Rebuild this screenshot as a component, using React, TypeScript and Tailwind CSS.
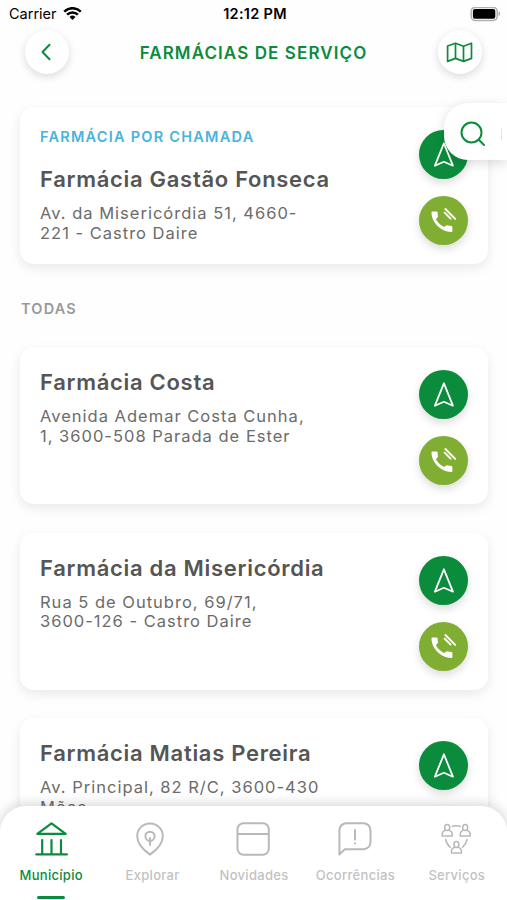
import type { ReactNode } from "react"
import clsx from "clsx"

type Farmacia = { nome: string; morada: string[]; chamada?: boolean }

const deServico: Farmacia = {
  nome: "Farmácia Gastão Fonseca",
  morada: ["Av. da Misericórdia 51, 4660-", "221 - Castro Daire"],
  chamada: true,
}

const todas: Farmacia[] = [
  { nome: "Farmácia Costa", morada: ["Avenida Ademar Costa Cunha,", "1, 3600-508 Parada de Ester"] },
  { nome: "Farmácia da Misericórdia", morada: ["Rua 5 de Outubro, 69/71,", "3600-126 - Castro Daire"] },
  { nome: "Farmácia Matias Pereira", morada: ["Av. Principal, 82 R/C, 3600-430", "Mões"] },
]

// --- Icons ---
function WifiIcon() {
  return (
    <svg width="19" height="14" viewBox="0 0 19 14" fill="none" stroke="#000" strokeWidth="2.5">
      <path d="M1.2 4.6a11.8 11.8 0 0 1 16.6 0" />
      <path d="M4.1 7.7a7.7 7.7 0 0 1 10.8 0" />
      <path d="M9.5 13 6.5 9.9a4.3 4.3 0 0 1 6 0z" fill="#000" stroke="none" />
    </svg>
  )
}

function BatteryIcon() {
  return (
    <svg width="31" height="15" viewBox="0 0 31 15">
      <rect x="1.2" y="0.4" width="26" height="13" rx="3.8" fill="#fff" stroke="#b0b0b0" strokeWidth="1.5" />
      <rect x="2.9" y="2.1" width="22.4" height="9.6" rx="2" fill="#000" />
      <path d="M28.6 4.6c2 .7 2 3.8 0 4.5z" fill="#a8a8a8" />
    </svg>
  )
}

function MapIcon() {
  return (
    <svg width="27" height="21" viewBox="0 0 27 21" fill="none" stroke="#0b8c3c" strokeWidth="1.7" strokeLinejoin="round">
      <path d="M1.6 4 9.5 1.2l8 3 8-3v15.2l-8 3-8-3-7.900 3z" />
      <path d="M9.5 1.2v15.2M17.5 4.2v15.2" />
    </svg>
  )
}

function NavigateIcon() {
  return (
    <svg width="22" height="27" viewBox="0 0 22 27" fill="none" stroke="#fff" strokeWidth="1.8" strokeLinejoin="round">
      <path d="M10.9 2.3 19.9 24.700 10.9 20.700 1.900 24.700z" />
    </svg>
  )
}

function PhoneIcon() {
  return (
    <svg width="27" height="27" viewBox="0 0 27 27" fill="#fff">
      <path d="M2.4 4.600H6.600a1 1 0 0 1 1 .9L8 9.700 5.900 12.200C7.600 15.400 10.600 18.200 14.200 20L16.500 18.200 21.500 18.900a1 1 0 0 1 .9 1V24a1 1 0 0 1-1 1C11 25 1.500 15.500 1.500 5.600a1 1 0 0 1 .9-1z" />
      <path d="M15.400 2 25.200 11.900M14.600 5.700 20.600 11.700" stroke="#fff" strokeWidth="1.900" strokeLinecap="round" />
    </svg>
  )
}

function MunicipioIcon() {
  return (
    <svg width="34" height="36" viewBox="0 0 34 36" fill="none" stroke="#0b8c3c" strokeWidth="2.2" strokeLinecap="round" strokeLinejoin="round">
      <path d="M17.500 2.400 31.700 12.900H3.300z" />
      <path d="M8.200 19v14M17.500 19v14M27 19v14M2.300 33.400h30.600" />
    </svg>
  )
}

function ExplorarIcon() {
  return (
    <svg width="34" height="36" viewBox="0 0 34 36" className="mr-1" fill="none" stroke="#b9b9b9" strokeWidth="2" strokeLinecap="round" strokeLinejoin="round">
      <path d="M17 33.600C12.500 30.400 4.200 24 4.200 14.900a12.800 12.400 0 0 1 25.600 0C29.800 24 21.500 30.400 17 33.600z" />
      <circle cx="17" cy="15.300" r="4.600" />
      <path d="M17 17v7" />
    </svg>
  )
}

function NovidadesIcon() {
  return (
    <svg width="34" height="36" viewBox="0 0 34 36" fill="none" stroke="#b9b9b9" strokeWidth="2">
      <rect x="1.500" y="2.300" width="31.300" height="31.400" rx="6" />
      <path d="M1.500 13h31.300" />
    </svg>
  )
}

function OcorrenciasIcon() {
  return (
    <svg width="34" height="36" viewBox="0 0 34 36" fill="none" stroke="#b9b9b9" strokeWidth="2" strokeLinecap="round" strokeLinejoin="round">
      <path d="M1.400 33.500V9.200a7 7 0 0 1 7-7H25.500a7 7 0 0 1 7 7v12a7 7 0 0 1-7 7H6.800z" />
      <path d="M17 9v9.500M17 22.200v.3" />
    </svg>
  )
}

function Pessoa({ x, y }: { x: number; y: number }) {
  return (
    <g transform={`translate(${x} ${y})`}>
      <ellipse cx="0" cy="-3.700" rx="2.500" ry="3" />
      <path d="M-2-.9C-4-.3-5 1-5 3v1.600H5V3C5 1 4-.3 2-.9" />
    </g>
  )
}

function ServicosIcon() {
  return (
    <svg width="34" height="36" viewBox="0 0 34 36" fill="none" stroke="#b9b9b9" strokeWidth="1.500" strokeLinecap="round" strokeLinejoin="round">
      <Pessoa x={8.200} y={10.300} />
      <Pessoa x={26.200} y={10.300} />
      <Pessoa x={17.400} y={27.300} />
      <path d="M13.300 5.300q4-1 8 0M6.700 18.500q1 5 4.400 7.700M28 18.500q-1 5-4.400 7.700" />
    </svg>
  )
}

// --- Buttons and cards ---
function RoundButton({ children }: { children: ReactNode }) {
  return (
    <button className="flex size-[44px] items-center justify-center rounded-full bg-white shadow-[0_3px_8px_rgba(0,0,0,0.14)]">
      {children}
    </button>
  )
}

function FarmaciaCard({ nome, morada, chamada }: Farmacia) {
  return (
    <article className="flex h-[157px] w-[468px] shrink-0 justify-between rounded-[14px] bg-white px-5 shadow-[0_4px_12px_rgba(0,0,0,0.085)]">
      <div className={clsx("whitespace-nowrap", chamada ? "pt-[20px]" : "pt-[21px]")}>
        {chamada && (
          <p className="mb-[18px] text-[14.5px] leading-5 font-semibold tracking-[1.25px] text-[#48b3dc]">FARMÁCIA POR CHAMADA</p>
        )}
        <h2 className="text-[22px] leading-7 font-semibold tracking-[0.700px] text-[#555]">{nome}</h2>
        <p className="mt-[11px] text-[16.500px] leading-[19.500px] tracking-[1px] text-[#6b6b6b]">
          {morada[0]}
          <br />
          {morada[1]}
        </p>
      </div>
      <div className="flex flex-col gap-[17px] pt-[23px]">
        <button className="flex size-[49px] items-center justify-center rounded-full bg-[#0b8c3c] shadow-[0_4px_8px_rgba(0,0,0,0.14)]">
          <NavigateIcon />
        </button>
        <button className="flex size-[49px] items-center justify-center rounded-full bg-[#80ae33] shadow-[0_4px_8px_rgba(0,0,0,0.14)]">
          <PhoneIcon />
        </button>
      </div>
    </article>
  )
}

const tabs = [
  { label: "Município", icon: <MunicipioIcon />, active: true },
  { label: "Explorar", icon: <ExplorarIcon /> },
  { label: "Novidades", icon: <NovidadesIcon /> },
  { label: "Ocorrências", icon: <OcorrenciasIcon /> },
  { label: "Serviços", icon: <ServicosIcon /> },
]

export default function App() {
  return (
    <div className="relative flex h-[900px] w-[507px] flex-col overflow-hidden bg-[#fefefe] font-['Inter','Liberation_Sans',sans-serif]">
      <div className="grid h-[28px] shrink-0 grid-cols-3 items-center pr-[6px] pl-[9px] text-[14.5px] text-black">
        <div className="flex items-center gap-[6px]">
          <span>Carrier</span>
          <WifiIcon />
        </div>
        <span className="text-center font-semibold tracking-[0.3px]">12:12 PM</span>
        <div className="flex justify-end">
          <BatteryIcon />
        </div>
      </div>

      <header className="flex h-[48px] shrink-0 items-center justify-between px-[25px]">
        <RoundButton>
          <svg width="12" height="18" viewBox="0 0 12 18" className="mr-[3px]" fill="none" stroke="#0b8c3c" strokeWidth="2" strokeLinecap="round" strokeLinejoin="round">
            <path d="M9.500 1.800 2.500 9l7 7.200" />
          </svg>
        </RoundButton>
        <h1 className="pt-[3px] text-[17px] font-semibold tracking-[1.100px] text-[#0b8c3c]">FARMÁCIAS DE SERVIÇO</h1>
        <RoundButton>
          <MapIcon />
        </RoundButton>
      </header>

      <main className="flex min-h-0 flex-1 flex-col overflow-hidden px-5 pt-[31px]">
        <FarmaciaCard {...deServico} />
        <p className="mt-[35px] mb-[28px] pl-px text-[14.500px] leading-5 font-semibold tracking-[1.200px] text-[#999]">TODAS</p>
        <div className="flex flex-col gap-[28.600px]">
          {todas.map((f) => (
            <FarmaciaCard key={f.nome} {...f} />
          ))}
        </div>
      </main>

      {/* search drawer, collapsed over the list */}
      <div className="absolute top-[103px] right-0 flex h-[57px] w-[63px] items-center justify-between rounded-l-[24px] bg-white pt-1 pr-[5px] pl-4 shadow-[0_3px_12px_rgba(0,0,0,0.14)]">
        <svg width="26" height="26" viewBox="0 0 26 26" fill="none" stroke="#0b8c3c" strokeWidth="2" strokeLinecap="round">
          <circle cx="11.500" cy="11.500" r="10" />
          <path d="m18.800 18.800 5.200 5.200" />
        </svg>
        <span className="h-3 w-px bg-[#e3e3e3]" />
      </div>

      <nav className="relative z-10 grid h-[94px] shrink-0 grid-cols-5 rounded-t-[26px] bg-white shadow-[0_-2px_12px_rgba(0,0,0,0.17)]">
        {tabs.map((tab) => (
          <div key={tab.label} className="flex flex-col items-center pt-[15px]">
            {tab.icon}
            <span
              className={clsx(
                "mt-[9px] pl-px text-[13px] leading-[18px] font-medium tracking-[0.300px]",
                tab.active ? "text-[#0b8c3c]" : "text-[#c2c2c2]"
              )}
            >
              {tab.label}
            </span>
            {tab.active && <span className="mt-[12px] h-[3px] w-[28px] rounded-full bg-[#0b8c3c]" />}
          </div>
        ))}
      </nav>
    </div>
  )
}
